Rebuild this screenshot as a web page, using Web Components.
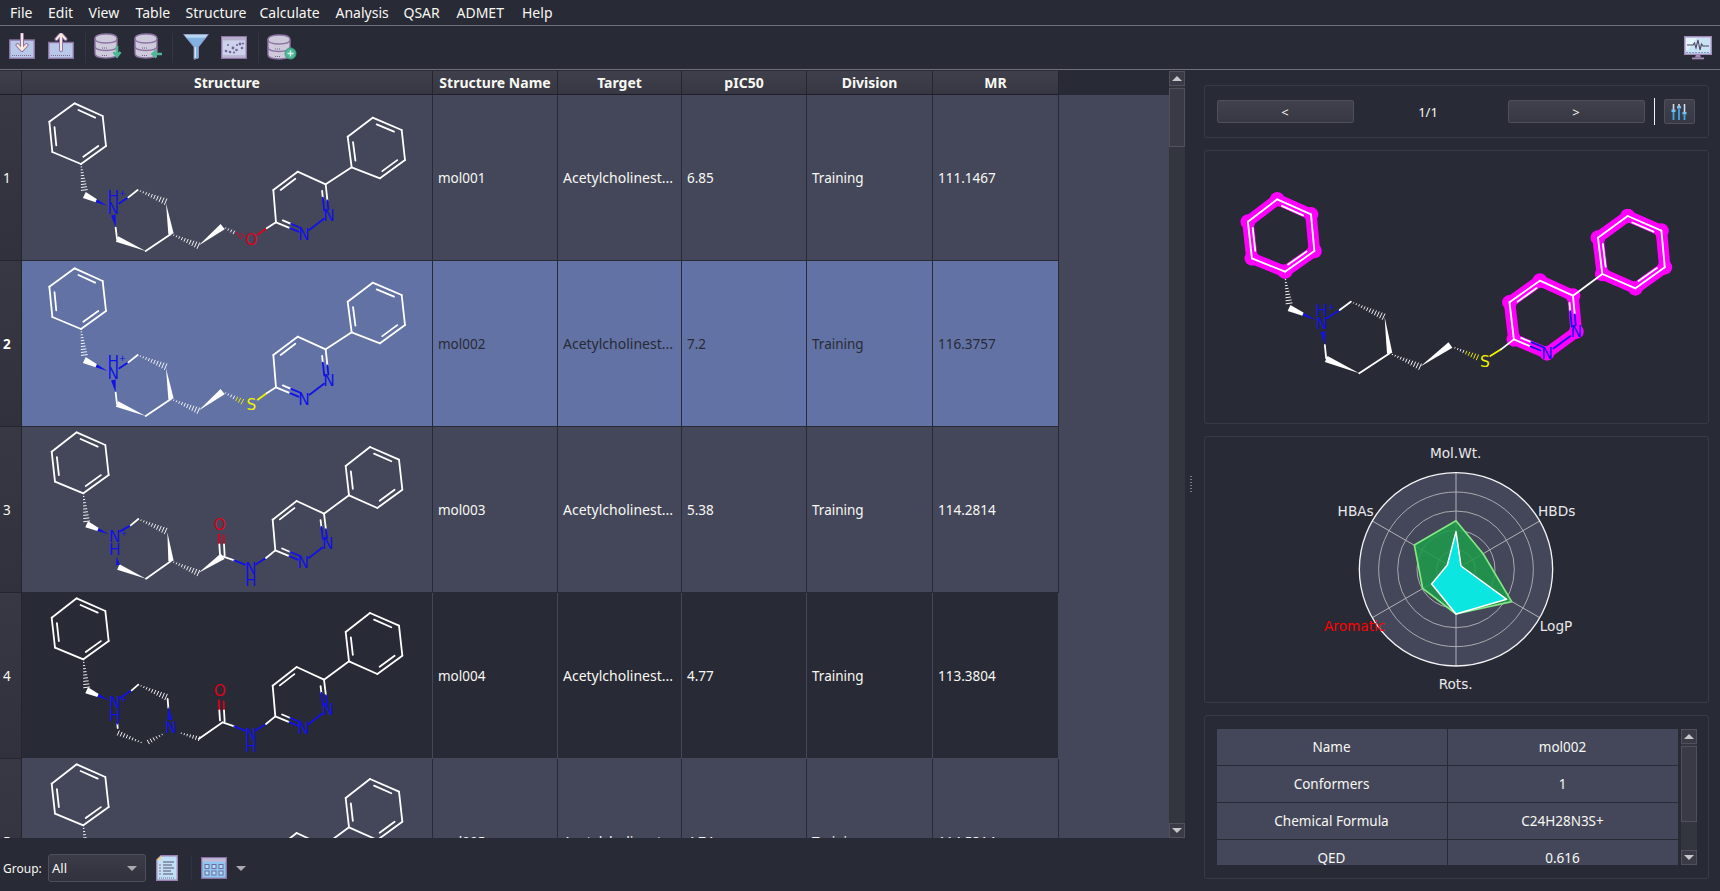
<!DOCTYPE html>
<html lang="en">
<head>
<meta charset="utf-8">
<title>Molecule table</title>
<style>
html,body{margin:0;padding:0;background:#282a36;}
body{font-family:"Noto Sans","Open Sans",sans-serif;color:#f8f8f2;overflow:hidden;}
</style>
</head>
<body>
<app-shell></app-shell>
<script>
/* ---------- drawing helpers ---------- */
const WHITE='#ffffff',BLUE='#1212e6',RED='#e0001a',YEL='#f2f200';
const BW=5.4;
const lerp=(a,b,t)=>[a[0]+(b[0]-a[0])*t,a[1]+(b[1]-a[1])*t];
const L=(a,b,c=WHITE,w=BW)=>`<line x1="${a[0]}" y1="${a[1]}" x2="${b[0]}" y2="${b[1]}" stroke="${c}" stroke-width="${w}" stroke-linecap="round"/>`;
const W=(a,b,c=WHITE,h=9,t0=0,t1=1)=>{
  const d=[b[0]-a[0],b[1]-a[1]],l=Math.hypot(d[0],d[1]),n=[-d[1]/l,d[0]/l];
  const p=lerp(a,b,t0),q=lerp(a,b,t1),h0=h*t0,h1=h*t1;
  return `<polygon fill="${c}" points="${p[0]+n[0]*h0},${p[1]+n[1]*h0} ${q[0]+n[0]*h1},${q[1]+n[1]*h1} ${q[0]-n[0]*h1},${q[1]-n[1]*h1} ${p[0]-n[0]*h0},${p[1]-n[1]*h0}"/>`;
};
const H=(a,b,c=WHITE,h=9,c2=null,split=.55)=>{
  const d=[b[0]-a[0],b[1]-a[1]],l=Math.hypot(d[0],d[1]),n=[-d[1]/l,d[0]/l],k=Math.round(l/9);let s='';
  for(let i=1;i<=k;i++){const t=i/k,p=lerp(a,b,t),r=h*t;s+=L([p[0]+n[0]*r,p[1]+n[1]*r],[p[0]-n[0]*r,p[1]-n[1]*r],(c2&&t>split)?c2:c,2.8);}
  return s;
};
const T=(s,p,c=BLUE,z=46)=>`<text x="${p[0]}" y="${p[1]+z*.36}" fill="${c}" font-size="${z}" text-anchor="middle" font-family="'DejaVu Sans',sans-serif">${s}</text>`;
const inner=(a,b,cx,t0=.14,t1=.86,k=.83)=>{const f=p=>[cx[0]+(p[0]-cx[0])*k,cx[1]+(p[1]-cx[1])*k];return [f(lerp(a,b,t0)),f(lerp(a,b,t1))];};
const center=ps=>[ps.reduce((s,p)=>s+p[0],0)/ps.length,ps.reduce((s,p)=>s+p[1],0)/ps.length];
const ring=(ps,o=[0,0],k=.83)=>{
  const q=ps.map(p=>[p[0]+o[0],p[1]+o[1]]),c=center(q);let s='';
  q.forEach((p,i)=>{s+=L(p,q[(i+1)%6]);});
  [0,2,4].forEach(i=>{const [a,b]=inner(q[i],q[(i+1)%6],c,.14,.86,k);s+=L(a,b);});
  return s;
};
const pyridazine=(C1,C2,C3,C4,N1,N2,k=.84)=>{
  const c=center([C1,C2,C3,C4,N1,N2]);let s='';
  s+=L(C1,C2)+L(C2,C3)+L(C3,C4);
  let [a,b]=inner(C2,C3,c,.14,.86,k);s+=L(a,b);
  s+=L(C4,lerp(C4,N1,.52))+L(lerp(C4,N1,.52),lerp(C4,N1,.82),BLUE);
  [a,b]=inner(C4,N1,c,.14,.9,k);s+=L(a,lerp(a,b,.35))+L(lerp(a,b,.35),b,BLUE);
  s+=L(lerp(N1,N2,.2),lerp(N1,N2,.78),BLUE);
  s+=L(C1,lerp(C1,N2,.5))+L(lerp(C1,N2,.5),lerp(C1,N2,.8),BLUE);
  [a,b]=inner(C1,N2,c,.12,.9,k);s+=L(a,lerp(a,b,.45))+L(lerp(a,b,.45),b,BLUE);
  s+=T('N',N1)+T('N',N2);
  return s;
};
const shift=(o,...ps)=>ps.map(p=>[p[0]+o[0],p[1]+o[1]]);
const A1=[[224,25],[308,63],[318,153],[243,207],[157,171],[148,80]];
const B1=[[1055,217],[1043,125],[1118,68],[1205,105],[1215,195],[1140,250]];
const A3=[[230,16],[316,54],[326,144],[250,199],[165,164],[155,74]];
const B3=[[1047,205],[1037,117],[1110,60],[1197,98],[1207,188],[1132,243]];
const P1=[[828,382],[820,285],[893,230],[977,268],[987,360],[912,417]];
const P3=[[826,370],[818,278],[890,222],[972,260],[983,350],[910,405]];

function etherMol(atom,col,dy){
  const o=[0,dy],p=(x,y)=>[x,y+dy];let s='';
  s+=ring(A1,o)+ring(B1,o);
  s+=H(p(243,207),p(253,285));
  s+=W(p(322,333),p(253,300),WHITE,10,.48,1)+W(p(322,333),p(253,300),BLUE,10,0,.48);
  s+=T('N',p(340,340))+T('H',p(340,303))+T('+',p(367,293),BLUE,26);
  s+=L(p(358,325),p(385,307),BLUE,5.6)+L(p(385,307),p(413,285));
  s+=H(p(413,285),p(497,320));
  s+=W(p(498,325),p(513,417),WHITE,8);
  s+=L(p(513,417),p(437,468));
  s+=W(p(437,468),p(351,432),WHITE,9);
  s+=L(p(351,432),p(347,398))+W(p(347,398),p(340,360),BLUE,7,.1,1);
  s+=H(p(513,417),p(595,452));
  s+=W(p(595,452),p(668,395),WHITE,10);
  s+=H(p(668,395),p(727,425),WHITE,8,col,.6);
  s+=T(atom,p(754,433),col,46);
  s+=L(p(773,419),p(800,400),col)+L(p(800,400),p(828,382));
  s+=pyridazine(...shift(o,...P1));
  s+=L(p(977,268),p(1055,217));
  return s;
}
function amideTail(){
  let s='';
  s+=L([658,352],[657,322],RED,5.6)+L([672,352],[671,325],RED,5);
  s+=L([658,352],[660,382])+L([672,352],[674,385]);
  s+=T('O',[659,293],RED,46);
  s+=L([668,388],[703,400])+L([703,400],[735,413],BLUE);
  s+=T('N',[752,423])+T('H',[752,461]);
  s+=L([768,412],[798,393],BLUE)+L([798,393],[826,370]);
  s+=pyridazine(...P3);
  s+=L([972,260],[1047,205]);
  return s;
}
function amideHead(){
  let s=ring(A3)+ring(B3);
  s+=H([250,199],[260,283]);
  s+=W([326,322],[260,292],WHITE,10,.48,1)+W([326,322],[260,292],BLUE,10,0,.48);
  s+=T('N',[344,329])+T('H',[344,367])+T('+',[372,318],BLUE,26);
  return s;
}
function amideMol(){
  let s=amideHead();
  s+=L([360,313],[392,295],BLUE,5.6)+L([392,295],[415,276]);
  s+=H([415,276],[497,312]);
  s+=W([502,316],[513,402],WHITE,8);
  s+=L([513,402],[438,455]);
  s+=W([438,455],[355,420],WHITE,9);
  s+=W([350,388],[354,414],BLUE,6);
  s+=H([513,402],[595,438]);
  s+=W([595,438],[668,388],WHITE,10);
  return s+amideTail();
}
function piperazineMol(){
  let s=amideHead();
  s+=L([360,315],[395,292],BLUE,5.6)+L([395,292],[415,275]);
  s+=H([415,275],[498,312]);
  s+=L([503,318],[505,345])+W([505,340],[510,380],BLUE,7);
  s+=T('N',[512,402]);
  s+=H([495,420],[445,447],WHITE,6,null)+H([432,452],[355,420],WHITE,7);
  s+=L([353,405],[352,392])+L([352,392],[352,388],BLUE);
  s+=H([535,418],[597,437],WHITE,6);
  s+=L([597,437],[668,388]);
  return s+amideTail();
}
const MOLS={
  O:etherMol('O',RED,0),
  S:etherMol('S',YEL,-3),
  A:amideMol(),
  P:piperazineMol()
};
function highlightMol(){
  const MG='#ff00ff';
  const A=[[257,388],[357,433],[367,543],[280,605],[182,565],[170,455]];
  const B=[[1295,438],[1395,482],[1405,592],[1318,655],[1220,612],[1207,503]];
  const C=[[958,808],[945,697],[1035,632],[1133,677],[1143,785],[1056,850]];
  let s='';
  [A,B,C].forEach(r=>{
    const c=center(r),out=r;
    r.forEach((p,i)=>{s+=L(p,r[(i+1)%6],MG,34);});
    r.forEach(p=>{s+=`<circle cx="${p[0]}" cy="${p[1]}" r="22" fill="${MG}"/>`;});
  });
  s+=ring(A,[0,0],.87)+ring(B,[0,0],.87);
  s+=H([280,620],[292,700],WHITE,9);
  s+=W([372,750],[292,714],WHITE,10,.48,1)+W([372,750],[292,714],BLUE,10,0,.48);
  s+=T('N',[388,760])+T('H',[388,720])+T('+',[417,712],BLUE,26);
  s+=L([404,745],[442,720],BLUE)+L([442,720],[475,695]);
  s+=H([475,695],[572,740]);
  s+=W([575,740],[590,850],WHITE,8);
  s+=L([590,850],[500,910]);
  s+=W([500,910],[402,867],WHITE,10);
  s+=L([402,865],[398,825])+W([398,825],[392,785],BLUE,7);
  s+=H([590,850],[680,890]);
  s+=W([680,890],[770,825],WHITE,10);
  s+=H([775,830],[850,862],WHITE,8,YEL,.55);
  s+=T('S',[872,873],YEL,46);
  s+=L([888,858],[920,838],YEL)+L([920,838],[958,808]);
  s+=pyridazine(...C,.87);
  s+=L([1133,677],[1220,612]);
  return s;
}

/* ---------- toolbar icons ---------- */
const OUT='#8d74a4',PALE='#b9c7e8';
const arrow=(x,y1,y2,dir)=>{
  const head=dir>0?`M${x-4.5} ${y2-5}L${x} ${y2}L${x+4.5} ${y2-5}`:`M${x-4.5} ${y1+5}L${x} ${y1}L${x+4.5} ${y1+5}`;
  return `<path d="M${x} ${y1}V${y2}${head}" fill="none" stroke="${OUT}" stroke-width="4" stroke-linecap="round" stroke-linejoin="round"/><path d="M${x} ${y1}V${y2}${head}" fill="none" stroke="#fbe8dc" stroke-width="2" stroke-linecap="round" stroke-linejoin="round"/>`;
};
const db=`<g stroke="${OUT}" stroke-width="1.4"><path d="M1 5.5C1 2.5 6 1 12 1s11 1.500 11 4.500V20.500c0 3-5 4.500-11 4.500S1 23.500 1 20.500Z" fill="#cfcadb"/><path d="M1 5.500c0 3 5 4.500 11 4.500s11-1.500 11-4.500M1 13c0 3 5 4.500 11 4.500s11-1.500 11-4.500" fill="none"/></g><path d="M8 15h5M8 22.500h5" stroke="#77668c" stroke-width="1" stroke-dasharray="1 1"/>`;
const ICONS={
  import:[26,26,`<rect x=".7" y="7" width="24.600" height="18.300" fill="${PALE}" stroke="${OUT}" stroke-width="1.400"/><path d="M3 22.500h20" stroke="#7b6a92" stroke-dasharray="1 1"/>${arrow(13,1,17,1)}`],
  export:[26,26,`<rect x=".7" y="9.500" width="24.600" height="15.800" fill="${PALE}" stroke="${OUT}" stroke-width="1.400"/><path d="M3 22.500h20" stroke="#7b6a92" stroke-dasharray="1 1"/>${arrow(13,1,17,-1)}`],
  dbdown:[30,26,`${db}<path d="M23 13v9M19.500 19l3.500 4.500L26.500 19" fill="none" stroke="#4fb795" stroke-width="2.600"/>`],
  dbleft:[30,26,`${db}<path d="M28 21H19M22.500 17.500L18.500 21l4 3.500" fill="none" stroke="#4fb795" stroke-width="2.400"/>`],
  filter:[26,27,`<path d="M.7 1.500H25.300L15.500 14V25L11 26.300V14Z" fill="#82b2e2" stroke="#8b90b8" stroke-width="1"/><path d="M1.500 1.800h23l-2 3h-19z" fill="#b9d6f0"/><path d="M12.300 14V25" stroke="#d5e6f8" stroke-width="1.400"/>`],
  plot:[26,23,`<rect x=".7" y=".7" width="24.600" height="21.600" fill="#cdd3ea" stroke="${OUT}" stroke-width="1.400"/><rect x="1.400" y="1.400" width="23.200" height="3" fill="#b6aeca"/><path d="M2.500 20h21" stroke="#7b6a92" stroke-dasharray="1 1"/><g fill="#75659a"><circle cx="5" cy="15" r="1.300"/><circle cx="9" cy="16" r="1.300"/><circle cx="12" cy="12" r="1.400"/><circle cx="15.500" cy="14" r="1.300"/><circle cx="19" cy="8" r="1.400"/><circle cx="13" cy="16.500" r="1.100"/><circle cx="21" cy="12" r="1.300"/><circle cx="7" cy="9" r="1"/><circle cx="16" cy="9" r="1.100"/><circle cx="22" cy="7.500" r="1.100"/></g>`],
  dbplus:[30,26,`${db}<circle cx="23.500" cy="19.500" r="5.500" fill="#4fb795" stroke="#3d9a80"/><path d="M23.500 16.500v6M20.500 19.500h6" stroke="#d8f5ea" stroke-width="1.400"/>`],
  monitor:[28,24,`<rect x=".7" y=".7" width="26.600" height="17.600" fill="#c9e3f4" stroke="#a48ab8" stroke-width="1.400"/><path d="M2 2h11L4 14H2z" fill="#e5f3fb"/><path d="M3 9h6l1.500-2 1.500 5 2-8 2 10 1.500-6 1.500 2h6" fill="none" stroke="#4d4560" stroke-width="1.100"/><path d="M2 16.500h24" stroke="#7f9ec0" stroke-dasharray="2 1"/><path d="M12 18.500h4l1 3h-6z" fill="#a48ab8"/><rect x="8" y="21.500" width="12" height="1.800" fill="#a48ab8"/>`],
  notes:[22,26,`<path d="M5 .7H21.300V25.300H.7V5Z" fill="#bfe0f6" stroke="#9c82b0" stroke-width="1.400"/><path d="M5 .7V5H.7Z" fill="#f2d27e"/><path d="M7 7h11M7 10h9M7 13h11M7 16h8M7 19h10" stroke="#56506e" stroke-width="1"/><path d="M3 10h2M3 13h2M3 16h2M3 19h2" stroke="#a06f7a" stroke-width="1.200"/><path d="M3 23h16" stroke="#7b6a92" stroke-dasharray="1 1"/>`],
  grid:[26,22,`<rect x=".7" y=".7" width="24.600" height="20.600" fill="#8fc6f2" stroke="#8c70a4" stroke-width="1.400"/><rect x="1.400" y="1.400" width="23.200" height="3.200" fill="#c6b8d4"/><g fill="#b7dcf8" stroke="#6c6c9a"><rect x="4" y="7.500" width="4" height="4"/><rect x="11" y="7.500" width="4" height="4"/><rect x="18" y="7.500" width="4" height="4"/><rect x="4" y="14" width="4" height="4"/><rect x="11" y="14" width="4" height="4"/><rect x="18" y="14" width="4" height="4"/></g>`],
  sliders:[16,18,`<path d="M2.500 1V7M8 1V3M13.500 1V9" stroke="#d8d8de" stroke-width="1.600"/><path d="M2.500 9V17M8 6V17M13.500 12V17" stroke="#3ea8ea" stroke-width="1.800"/><rect x=".5" y="6.500" width="4" height="2.500" fill="#6fc4f4"/><rect x="6" y="3" width="4" height="2.500" fill="#6fc4f4"/><rect x="11.500" y="9" width="4" height="2.500" fill="#6fc4f4"/>`]
};

/* ---------- custom elements ---------- */
function def(name,css,html){
  customElements.define(name,class extends HTMLElement{
    connectedCallback(){
      if(this.shadowRoot)return;
      const r=this.attachShadow({mode:'open'});
      const body=typeof html==='function'?html(this):html;
      r.innerHTML=`<style>${css}</style>${body}`;
    }
  });
}
def('tool-icon',`:host{display:block;line-height:0;flex:none}svg{display:block}`,el=>{
  const [w,h,s]=ICONS[el.getAttribute('name')];
  return `<svg width="${w}" height="${h}" viewBox="0 0 ${w} ${h}">${s}</svg>`;
});
def('menu-bar',`:host{display:grid;grid-template-columns:38px 40.500px 47px 50px 74px 76px 68px 53px 65.500px auto;height:25px;padding-left:10px;align-items:center;border-bottom:1px solid #6f7079;font-size:14px;color:#f8f8f2;white-space:nowrap;box-sizing:content-box}
span{line-height:25px}`,
`<span>File</span><span>Edit</span><span>View</span><span>Table</span><span>Structure</span><span>Calculate</span><span>Analysis</span><span>QSAR</span><span>ADMET</span><span>Help</span>`);
def('tool-bar',`:host{display:flex;padding:7px 8px 0 9px;box-sizing:border-box;border-bottom:1px solid #6f7079;align-items:flex-start;height:44px}
.s{width:1px;height:30px;background:#343642;flex:none}
.g{flex:none}`,
`<tool-icon name="import"></tool-icon><div class="g" style="width:13px"></div><tool-icon name="export"></tool-icon>
<div class="g" style="width:11px"></div><div class="s"></div><div class="g" style="width:8px"></div>
<tool-icon name="dbdown"></tool-icon><div class="g" style="width:10px"></div><tool-icon name="dbleft"></tool-icon>
<div class="g" style="width:8px"></div><div class="s"></div><div class="g" style="width:10px"></div>
<tool-icon name="filter"></tool-icon><div class="g" style="width:12px"></div><tool-icon name="plot" style="margin-top:3px"></tool-icon>
<div class="g" style="width:11px"></div><div class="s"></div><div class="g" style="width:8px"></div>
<tool-icon name="dbplus" style="margin-top:1px"></tool-icon>
<tool-icon name="monitor" style="margin-left:auto;margin-top:3px"></tool-icon>`);
def('mol-figure',`:host{display:block;width:411px;height:165px;overflow:hidden}svg{display:block}`,el=>
`<svg width="411" height="165" viewBox="66 0 1233 495">${MOLS[el.getAttribute('kind')]}</svg>`);

const GRID='22px 411px 125px 124px 125px 126px 126px';
def('table-head',`:host{display:grid;grid-template-columns:${GRID};height:24px;font-size:14px;font-weight:700;color:#f8f8f2;flex:none;white-space:nowrap}
div{background:linear-gradient(#3f404c,#363742);border-right:1px solid #24252f;border-bottom:1px solid #1e1f28;display:flex;align-items:center;justify-content:center;box-sizing:border-box}`,
`<div></div><div>Structure</div><div>Structure Name</div><div>Target</div><div>pIC50</div><div>Division</div><div>MR</div>`);
def('mol-row',`:host{display:grid;grid-template-columns:${GRID};height:166px;flex:none;font-size:13.500px;--bg:#44475a;--line:#282a36;--fg:#f8f8f2;white-space:nowrap}
:host([tone=selected]){--bg:#6272a4;--fg:#282a36}
:host([tone=dark]){--bg:#282a36;--line:#44475a}
div{box-sizing:border-box;background:var(--bg);border-right:1px solid var(--line);border-bottom:1px solid var(--line);color:var(--fg);display:flex;align-items:center;padding-left:5px;overflow:hidden}
.h{background:linear-gradient(#373843,#30313c);padding-left:3px;color:#f8f8f2;border-right-color:#24252f;border-bottom-color:#24252f}
:host([tone=selected]) .h{font-weight:700;color:#fff}
.m{padding:0;border-right:1px solid var(--line)}
.tg{font-size:14px}`,
el=>{const a=n=>el.getAttribute(n);return `<div class="h">${a('n')}</div><div class="m"><mol-figure kind="${a('kind')}"></mol-figure></div><div>${a('name')}</div><div class="tg">Acetylcholinest...</div><div>${a('pic')}</div><div>Training</div><div>${a('mr')}</div>`;});
def('scroll-bar',`:host{display:flex;flex-direction:column;width:16px;flex:none;background:#34363f;box-sizing:border-box}
.b{height:15px;background:#3a3b46;border:1px solid #50515c;box-sizing:border-box;display:flex;align-items:center;justify-content:center;flex:none}
.t{background:#393a46;border:1px solid #50515c;box-sizing:border-box;margin-top:2px;flex:none}
.f{flex:1}
i{width:0;height:0;border-left:5px solid transparent;border-right:5px solid transparent}
.u{border-bottom:5px solid #c8c8cc}.d{border-top:5px solid #c8c8cc}`,
el=>`<div class="b"><i class="u"></i></div><div class="t" style="height:${el.getAttribute('thumb')}px"></div><div class="f"></div><div class="b"><i class="d"></i></div>`);
def('mol-table',`:host{display:flex;height:767px;flex:none}
.v{width:1169px;height:767px;overflow:hidden;display:flex;flex-direction:column;background:#44475a}
.top{display:flex;flex:none;background:#282a36}
.rows{width:1059px;display:flex;flex-direction:column}`,
`<div class="v"><div class="top"><table-head></table-head></div><div class="rows">
<mol-row n="1" kind="O" name="mol001" pic="6.85" mr="111.1467"></mol-row>
<mol-row n="2" kind="S" name="mol002" pic="7.2" mr="116.3757" tone="selected"></mol-row>
<mol-row n="3" kind="A" name="mol003" pic="5.38" mr="114.2814"></mol-row>
<mol-row n="4" kind="P" name="mol004" pic="4.77" mr="113.3804" tone="dark"></mol-row>
<mol-row n="5" kind="A" name="mol005" pic="4.74" mr="114.5314"></mol-row>
</div></div><scroll-bar thumb="59"></scroll-bar>`);
def('bottom-bar',`:host{display:flex;align-items:flex-start;height:53px;padding:16px 0 0 3px;box-sizing:border-box;font-size:12px;flex:none}
.l{width:45px;line-height:30px}
.c{width:98px;height:28px;box-sizing:border-box;border:1px solid #4e4f5c;border-radius:3px;background:linear-gradient(#3b3c48,#30313c);display:flex;align-items:center;padding-left:3px;justify-content:space-between;font-size:13px;margin-right:10px}
i{display:block;width:0;height:0;border-left:5px solid transparent;border-right:5px solid transparent;border-top:5px solid #a9a9af}
.c i{margin-right:8px}
.s{width:1px;height:26px;background:#30323e;margin:1px 9px 0 13px}`,
`<div class="l">Group:</div><div class="c">All<i></i></div><tool-icon name="notes" style="margin-top:1px"></tool-icon><div class="s"></div><tool-icon name="grid" style="margin-top:3px"></tool-icon><i style="margin:12px 0 0 9px"></i>`);
def('side-panel',`:host{display:block;box-sizing:border-box;border:1px solid #383a47;border-radius:3px;flex:none;overflow:hidden}`,`<slot></slot>`);
def('nav-panel',`:host{display:flex;align-items:center;height:51px;padding-left:12px;font-size:13px}
.b{width:137px;height:23px;box-sizing:border-box;border:1px solid #4e4f5c;border-radius:2px;background:linear-gradient(#40414d,#373843);display:flex;align-items:center;justify-content:center;flex:none;font-size:13px}
.n{width:154px;text-align:center;padding-right:5px;box-sizing:border-box;flex:none}
.r{width:1px;height:27px;background:#f4f4f4;margin:0 9px 0 9px;flex:none}
.x{width:31px;height:25px;box-sizing:border-box;border:1px solid #4e4f5c;border-radius:2px;background:linear-gradient(#40414d,#373843);display:flex;align-items:center;justify-content:center;flex:none}`,
`<div class="b">&lt;</div><div class="n">1/1</div><div class="b">&gt;</div><div class="r"></div><div class="x"><tool-icon name="sliders"></tool-icon></div>`);
def('mol-view',`:host{display:block;height:272px}svg{display:block}`,
`<svg width="503" height="272" viewBox="43 243 1490 816" preserveAspectRatio="none" font-family="DejaVu Sans">${highlightMol()}</svg>`);
def('radar-chart',`:host{display:block;height:265px}svg{display:block}`,()=>{
  const R=290;let s=`<circle cx="498" cy="418" r="${R}" fill="#44475a"/>`;
  [58,117,175,232].forEach(r=>{s+=`<circle cx="498" cy="418" r="${r}" fill="none" stroke="#a9a9ad" stroke-width="3"/>`;});
  [0,60,120,180,240,300].forEach(a=>{const t=a*Math.PI/180;s+=`<line x1="498" y1="418" x2="${498+R*Math.sin(t)}" y2="${418-R*Math.cos(t)}" stroke="#b2b2b4" stroke-width="3"/>`;});
  s+=`<circle cx="498" cy="418" r="${R}" fill="none" stroke="#f4f4f4" stroke-width="4"/>`;
  s+=`<polygon points="498,272 580,372 665,515 498,552 398,475 373,345" fill="#1f9a4a" fill-opacity=".88" stroke="#84e884" stroke-width="5" stroke-linejoin="round"/>`;
  s+=`<polygon points="498,305 513,408 650,508 498,552 425,462 472,405" fill="#0be6e0" stroke="#ffffff" stroke-width="4.500" stroke-linejoin="round"/>`;
  const lab=(t,x,y,col='#e8e8ea')=>`<text x="${x}" y="${y}" fill="${col}" font-size="41" text-anchor="middle">${t}</text>`;
  s+=lab('Mol.Wt.',497,84)+lab('HBDs',800,257)+lab('LogP',798,602)+lab('Rots.',497,776)+lab('Aromatic',194,602,'#ff0000')+lab('HBAs',197,257);
  return `<svg width="503" height="265" viewBox="-255 21 1509 795" font-family="'DejaVu Sans',sans-serif">${s}</svg>`;
});
def('prop-table',`:host{display:flex;height:162px;padding:13px 13px 0 12px;box-sizing:border-box;font-size:13.500px}
.t{width:462px;height:136px;overflow:hidden;flex:none;margin-right:1px}
.r{display:grid;grid-template-columns:231px 231px;height:37px;background:#44475a;border-bottom:1px solid #282a36;box-sizing:border-box}
.r div{display:flex;align-items:center;justify-content:center;border-right:1px solid #282a36}
scroll-bar{height:136px;margin-left:1px}`,
`<div class="t">
<div class="r"><div>Name</div><div>mol002</div></div>
<div class="r"><div>Conformers</div><div>1</div></div>
<div class="r"><div>Chemical Formula</div><div>C24H28N3S+</div></div>
<div class="r"><div>QED</div><div>0.616</div></div>
</div><scroll-bar thumb="76"></scroll-bar>`);
def('app-shell',`:host{display:flex;flex-direction:column;width:1720px;height:891px;overflow:hidden;background:#282a36}
.main{display:flex;flex:1;padding-top:1px;min-height:0}
.left{width:1185px;display:flex;flex-direction:column;flex:none}
.split{width:18.500px;flex:none;display:flex;align-items:center;padding-left:5px;box-sizing:border-box}
.split i{display:block;width:2px;height:16px;background:repeating-linear-gradient(#777a88 0 1px,transparent 1px 3px);margin-top:6px}
.right{width:505px;flex:none;display:flex;flex-direction:column;gap:12px;padding-top:14px}`,
`<menu-bar></menu-bar><tool-bar></tool-bar>
<div class="main">
 <div class="left"><mol-table></mol-table><bottom-bar></bottom-bar></div>
 <div class="split"><i></i></div>
 <div class="right">
  <side-panel style="height:53px"><nav-panel></nav-panel></side-panel>
  <side-panel style="height:274px"><mol-view></mol-view></side-panel>
  <side-panel style="height:267px"><radar-chart></radar-chart></side-panel>
  <side-panel style="height:164px"><prop-table></prop-table></side-panel>
 </div>
</div>`);
</script>
</body>
</html>
